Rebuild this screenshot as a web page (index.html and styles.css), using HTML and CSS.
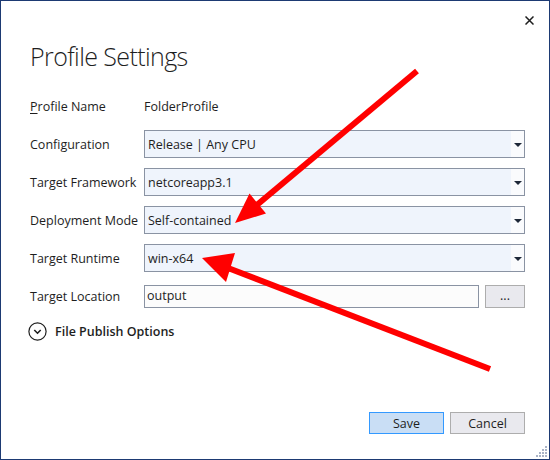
FILE: index.html
```html
<!DOCTYPE html>
<html>
<head>
<meta charset="utf-8">
<link rel="stylesheet" href="styles.css">
</head>
<body>
<div class="dialog">
  <div class="close-row">
    <svg class="close" width="9" height="9" viewBox="0 0 9 9"><path d="M0.5 0.5 L8.5 8.5 M8.5 0.5 L0.5 8.5" stroke="#1e1e1e" stroke-width="1.5"/></svg>
  </div>
  <h1 class="title">Profile Settings</h1>
  <div class="form">
    <div class="label"><u>P</u>rofile Name</div>
    <div class="value">FolderProfile</div>

    <div class="label">Configuration</div>
    <div class="combo"><span class="combo-text">Release | Any CPU</span><span class="combo-btn"><i class="tri"></i></span></div>

    <div class="label">Target Framework</div>
    <div class="combo"><span class="combo-text">netcoreapp3.1</span><span class="combo-btn"><i class="tri"></i></span></div>

    <div class="label">Deployment Mode</div>
    <div class="combo"><span class="combo-text">Self-contained</span><span class="combo-btn"><i class="tri"></i></span></div>

    <div class="label">Target Runtime</div>
    <div class="combo"><span class="combo-text">win-x64</span><span class="combo-btn"><i class="tri"></i></span></div>

    <div class="label">Target Location</div>
    <div class="loc-row">
      <div class="textbox">output</div>
      <div class="browse">...</div>
    </div>
  </div>
  <div class="expander">
    <svg width="19" height="19" viewBox="0 0 19 19"><circle cx="9.5" cy="9.5" r="8.6" fill="none" stroke="#1e1e1e" stroke-width="1.2"/><path d="M6.3 8 L9.5 11.2 L12.7 8" fill="none" stroke="#1e1e1e" stroke-width="1.6"/></svg>
    <span class="expander-text">File Publish Options</span>
  </div>
  <div class="footer">
    <div class="btn btn-primary">Save</div>
    <div class="btn">Cancel</div>
  </div>

  <svg class="arrows" width="550" height="460" viewBox="0 0 550 460">
    <line x1="417" y1="71" x2="252" y2="209" stroke="#ff0000" stroke-width="6"/>
    <polygon points="235,223 249.5,193.5 266,213.5" fill="#ff0000"/>
    <line x1="490" y1="369" x2="228" y2="268" stroke="#ff0000" stroke-width="6"/>
    <polygon points="202,258 235,253 226,282" fill="#ff0000"/>
  </svg>
  <svg class="grip" width="12" height="12" viewBox="0 0 12 12">
    <g fill="#a9b3c6">
      <rect x="9" y="0" width="2" height="2"/>
      <rect x="6" y="3" width="2" height="2"/><rect x="9" y="3" width="2" height="2"/>
      <rect x="3" y="6" width="2" height="2"/><rect x="6" y="6" width="2" height="2"/><rect x="9" y="6" width="2" height="2"/>
      <rect x="0" y="9" width="2" height="2"/><rect x="3" y="9" width="2" height="2"/><rect x="6" y="9" width="2" height="2"/><rect x="9" y="9" width="2" height="2"/>
    </g>
  </svg>
</div>
</body>
</html>
```

FILE: styles.css
```css
html, body {
  margin: 0;
  padding: 0;
  background: #ffffff;
}

.dialog {
  position: relative;
  box-sizing: border-box;
  width: 550px;
  height: 460px;
  border: 1px solid #1d3a73;
  background: #ffffff;
  padding: 0 24px 25px 29px;
  display: flex;
  flex-direction: column;
  font-family: "Open Sans", "Noto Sans", sans-serif;
  font-size: 12.5px;
  color: #1e1e1e;
}

.close-row {
  height: 39px;
  display: flex;
  justify-content: flex-end;
  margin-right: -9px;
}

.close {
  margin-top: 15px;
}

.title {
  margin: 0;
  font-size: 25px;
  line-height: 33px;
  font-weight: 300;
  color: #1e1e1e;
  letter-spacing: -0.6px;
}

.form {
  margin-top: 19px;
  display: grid;
  grid-template-columns: 114px 1fr;
  grid-auto-rows: 28px;
  row-gap: 10px;
  align-items: center;
}

.label u {
  text-decoration: underline;
  text-underline-offset: 2px;
}

.combo {
  height: 28px;
  box-sizing: border-box;
  border: 1px solid #8a93a3;
  background: #eff4fc;
  display: flex;
  align-items: stretch;
}

.combo-text {
  flex: 1;
  display: flex;
  align-items: center;
  padding-left: 3px;
}

.combo-btn {
  width: 13px;
  background: #fafbfd;
  display: flex;
  align-items: center;
  justify-content: center;
}

.tri {
  width: 0;
  height: 0;
  border-left: 4px solid transparent;
  border-right: 4px solid transparent;
  border-top: 4px solid #1e2838;
  margin-top: 1px;
}

.loc-row {
  display: flex;
  gap: 6px;
  height: 23px;
}

.textbox {
  flex: 1;
  box-sizing: border-box;
  border: 1px solid #8a93a3;
  background: #fcfcfc;
  display: flex;
  align-items: center;
  padding-left: 2px;
  padding-bottom: 2px;
}

.browse {
  width: 40px;
  box-sizing: border-box;
  border: 1px solid #adadad;
  background: #e9e9ee;
  display: flex;
  align-items: center;
  justify-content: center;
  padding-bottom: 1px;
}

.expander {
  margin-top: 10px;
  margin-left: -2px;
  height: 22px;
  display: flex;
  align-items: center;
  gap: 8px;
}

.expander-text {
  font-weight: 600;
  font-size: 12.5px;
}

.footer {
  margin-top: auto;
  display: flex;
  justify-content: flex-end;
  gap: 6px;
}

.btn {
  width: 75px;
  height: 22px;
  box-sizing: border-box;
  border: 1px solid #adadad;
  background: #e9e9ee;
  display: flex;
  align-items: center;
  justify-content: center;
  font-size: 12.5px;
}

.btn-primary {
  border-color: #3399ff;
  background: #c9def5;
}

.arrows {
  position: absolute;
  left: -1px;
  top: -1px;
  pointer-events: none;
}

.grip {
  position: absolute;
  right: 1px;
  bottom: 1px;
}
```
